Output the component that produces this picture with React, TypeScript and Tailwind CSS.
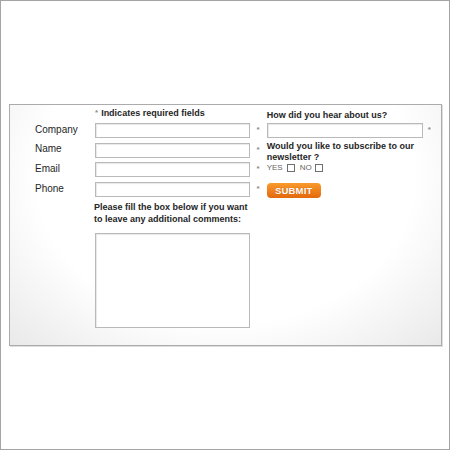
import React from "react";

const Star = () => (
    <span className="text-[8px] leading-none text-[#8a8a8a] font-bold">*</span>
);

const Field = ({ className = "" }: { className?: string }) => (
    <div className={`h-[15px] border border-[#b9b9b9] bg-white shadow-[inset_1px_1px_1px_#e8e8e8] ${className}`} />
);

const Box = () => (
    <span className="inline-block w-[8px] h-[8px] border border-[#6f6f6f] bg-white" />
);

export default function App() {
    const rows = ["Company", "Name", "Email", "Phone"];

    return (
        <div className="w-[450px] h-[450px] border border-[#a4a4a4] bg-white font-['Liberation_Sans',Arial,sans-serif] text-[#262626]">
            {/* Form panel */}
            <div className="ml-[8px] mt-[103px] w-[433px] h-[242px] border border-[#ababab] shadow-[1px_1px_0_#dedede] bg-[radial-gradient(ellipse_at_50%_30%,#ffffff_62%,#e9e9e9_100%)] flex">
                {/* Left side: contact fields */}
                <div className="pl-[25px] pt-[2px] w-[256px] flex flex-col">
                    <div className="ml-[60px] h-[12px] leading-[12px] text-[9px] font-bold flex items-center gap-[3px]">
                        <Star />
                        <span>Indicates required fields</span>
                    </div>

                    <div className="mt-[4px] flex flex-col gap-[4.7px]">
                        {rows.map((label) => (
                            <div key={label} className="flex items-center h-[15px]">
                                <span className="w-[60px] text-[10px] leading-none -mt-[2px]">{label}</span>
                                <Field className="w-[155px]" />
                                <span className="w-[16px] flex justify-center -mt-[1px]">
                                    <Star />
                                </span>
                            </div>
                        ))}
                    </div>

                    <p className="ml-[59px] mt-[4px] text-[9px] leading-[12px] font-bold">
                        Please fill the box below if you want
                        <br />
                        to leave any additional comments:
                    </p>
                    <div className="ml-[60px] mt-[8px] w-[155px] h-[95px] border border-[#b9b9b9] bg-white shadow-[inset_1px_1px_1px_#e8e8e8]" />
                </div>

                {/* Right side: referral + newsletter */}
                <div className="pl-[0.7px] pt-[4px] flex flex-col">
                    <p className="h-[12px] leading-[12px] text-[9px] font-bold">How did you hear about us?</p>
                    <div className="mt-[2px] flex items-center">
                        <Field className="w-[156px]" />
                        <span className="w-[13px] flex justify-center -mt-[1px]">
                            <Star />
                        </span>
                    </div>
                    <p className="mt-[3px] text-[9px] leading-[11px] font-bold">
                        Would you like to subscribe to our
                        <br />
                        newsletter ?
                    </p>
                    <div className="h-[10px] flex items-center text-[8px] text-[#666] leading-none">
                        <span>YES</span>
                        <span className="ml-[4px] flex"><Box /></span>
                        <span className="ml-[5px]">NO</span>
                        <span className="ml-[3px] flex"><Box /></span>
                    </div>
                    <button className="mt-[10px] w-[54px] h-[15px] rounded-[4px] bg-gradient-to-b from-[#f99b2c] to-[#e3680b] text-white text-[9.5px] font-bold leading-none tracking-[0.2px] flex items-center justify-center [text-shadow:0_0_1px_#c05000]">
                        SUBMIT
                    </button>
                </div>
            </div>
        </div>
    );
}
